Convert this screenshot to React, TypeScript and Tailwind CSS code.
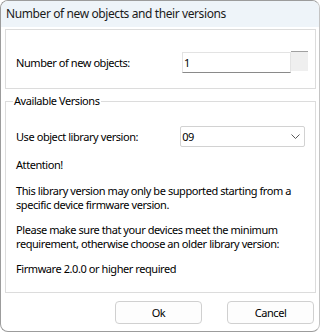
export default function App() {
  return (
    <div className="w-[321px] h-[333px] bg-white text-[11px] leading-[14px] tracking-[-0.43px] text-black font-['Noto_Sans',sans-serif] whitespace-nowrap">
      <div className="w-[320px] h-[332px] rounded-[8px] border border-[#9c9c9c] border-r-[#c4c4c4] overflow-hidden flex flex-col bg-white">
        <div className="h-[26px] shrink-0 bg-[#eef4f9] pl-[5px] flex items-center text-[12px] tracking-[-0.4px] text-[#1a1a1a]">
          Number of new objects and their versions
        </div>

        <div className="ml-[4px] mt-[2px] w-[311px] h-[60px] border border-[#dcdcdc] pt-[22px] pl-[10px]">
          <div className="flex items-center">
            <span className="w-[166px]">Number of new objects:</span>
            <div className="flex items-start">
              <div className="w-[109px] h-[21px] border border-[#e3e3e3] border-b-[#8a8a8a] flex items-center pl-[1px]">1</div>
              <div className="w-[17px] h-[20px] -mt-[1px] bg-[#efefef] border-t border-[#a0a0a0]" />
            </div>
          </div>
        </div>

        <fieldset className="ml-[4px] mt-[4px] w-[311px] h-[200px] min-w-0 border border-[#dcdcdc] px-[10px]">
          <legend className="ml-[-3px] px-[1px] leading-[16px]">Available Versions</legend>
          <div className="flex items-center mt-[17px]">
            <span className="w-[166px]">Use object library version:</span>
            <div className="w-[126px] h-[21px] border border-[#d2d2d2] rounded-[2px] flex items-center justify-between pl-[1px] pr-[4px]">
              <span>09</span>
              <svg width="9" height="5" viewBox="0 0 9 5" fill="none">
                <polyline points="0.5,0.5 4.5,4.5 8.5,0.5" stroke="#5a5a5a" strokeWidth="1" />
              </svg>
            </div>
          </div>
          <p className="mt-[11px]">Attention!</p>
          <p className="mt-[12px]">
            This library version may only be supported starting from a
            <br />
            specific device firmware version.
          </p>
          <p className="mt-[11px]">
            Please make sure that your devices meet the minimum
            <br />
            requirement, otherwise choose an older library version:
          </p>
          <p className="mt-[11px]">Firmware 2.0.0 or higher required</p>
        </fieldset>

        <div className="flex justify-end gap-[25px] pr-[5px] mt-[8px]">
          <button className="w-[87px] h-[23px] rounded-[4px] border border-[#d0d0d0] bg-[#fdfdfd]">Ok</button>
          <button className="w-[87px] h-[23px] rounded-[4px] border border-[#d0d0d0] bg-[#fdfdfd]">Cancel</button>
        </div>
      </div>
    </div>
  );
}
